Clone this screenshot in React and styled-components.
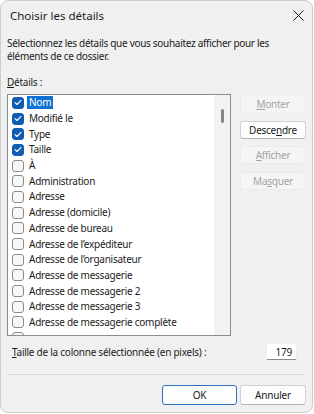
import React from 'react';
import styled, { createGlobalStyle } from 'styled-components';

const columns = [
  { label: 'Nom', checked: true, selected: true },
  { label: 'Modifié le', checked: true },
  { label: 'Type', checked: true },
  { label: 'Taille', checked: true },
  { label: 'À' },
  { label: 'Administration' },
  { label: 'Adresse' },
  { label: 'Adresse (domicile)' },
  { label: 'Adresse de bureau' },
  { label: 'Adresse de l’expéditeur' },
  { label: 'Adresse de l’organisateur' },
  { label: 'Adresse de messagerie' },
  { label: 'Adresse de messagerie 2' },
  { label: 'Adresse de messagerie 3' },
  { label: 'Adresse de messagerie complète' },
  { label: '' },
];

const CheckMark = () => (
  <svg width="8" height="7" viewBox="0 0 8 7">
    <path d="M1 3.6 L3 5.5 L7 1.3" fill="none" stroke="#fff" strokeWidth="1.1" strokeLinecap="round" strokeLinejoin="round" />
  </svg>
);

const App = () => {
  return (
    <>
      <GlobalStyle />
      <Window>
        <TitleBar>
          <Title>Choisir les détails</Title>
          <CloseButton>
            <svg width="11" height="11" viewBox="0 0 11 11">
              <path d="M0.5 0.5 L10.5 10.5 M10.5 0.5 L0.5 10.5" stroke="#1a1a1a" strokeWidth="1" />
            </svg>
          </CloseButton>
        </TitleBar>
        <Body>
          <Intro>
            Sélectionnez les détails que vous souhaitez afficher pour les
            <br />
            éléments de ce dossier.
          </Intro>
          <Label>
            <u>D</u>étails :
          </Label>
          <MainRow>
            <ListBox>
              <Rows>
                {columns.map((col, i) => (
                  <Row key={i}>
                    <Check checked={col.checked}>{col.checked && <CheckMark />}</Check>
                    {col.label && <RowText selected={col.selected}>{col.label}</RowText>}
                  </Row>
                ))}
              </Rows>
              <ScrollTrack>
                <Thumb />
              </ScrollTrack>
            </ListBox>
            <SideButtons>
              <SideButton disabled>
                <u>M</u>onter
              </SideButton>
              <SideButton>
                Desce<u>n</u>dre
              </SideButton>
              <SideButton disabled>
                <u>A</u>fficher
              </SideButton>
              <SideButton disabled>
                Ma<u>s</u>quer
              </SideButton>
            </SideButtons>
          </MainRow>
          <WidthRow>
            <span>
              <u>T</u>aille de la colonne sélectionnée (en pixels) :
            </span>
            <WidthInput>179</WidthInput>
          </WidthRow>
        </Body>
        <Separator />
        <Footer>
          <DialogButton primary>OK</DialogButton>
          <DialogButton>Annuler</DialogButton>
        </Footer>
      </Window>
    </>
  );
};

export default App;

const GlobalStyle = createGlobalStyle`
  body {
    margin: 0;
    background: #ffffff;
    font-family: "Noto Sans", "Open Sans", sans-serif;
    color: #1b1b1b;
  }
`;

const Window = styled.div`
  width: 313px;
  height: 413px;
  box-sizing: border-box;
  border: 1px solid #cdcdcd;
  border-radius: 8px;
  background: #f0f0f0;
  display: flex;
  flex-direction: column;
  overflow: hidden;
`;

const TitleBar = styled.div`
  height: 29px;
  display: flex;
  align-items: center;
  justify-content: space-between;
  padding: 0 8px 0 9px;
`;

const Title = styled.div`
  font-size: 11.5px;
  color: #1a1a1a;
`;

const CloseButton = styled.div`
  width: 12px;
  height: 12px;
  display: flex;
  align-items: center;
  justify-content: center;
`;

const Body = styled.div`
  padding: 7px 6px 0 6px;
  font-size: 10px;
  letter-spacing: -0.25px;
`;

const Intro = styled.p`
  margin: 0;
  line-height: 13px;
  white-space: nowrap;
  letter-spacing: -0.3px;
`;

const Label = styled.div`
  margin-top: 13px;
  line-height: 13px;
`;

const MainRow = styled.div`
  display: flex;
  gap: 9px;
  margin-top: 5px;
`;

const ListBox = styled.div`
  width: 224px;
  height: 242px;
  box-sizing: border-box;
  border: 1px solid #8c8c8c;
  background: #ffffff;
  display: flex;
  overflow: hidden;
`;

const Rows = styled.div`
  flex: 1;
`;

const Row = styled.div`
  height: 15.7px;
  display: flex;
  align-items: center;
  padding-left: 4px;
  white-space: nowrap;
`;

const Check = styled.span`
  width: 12px;
  height: 12px;
  box-sizing: border-box;
  border-radius: 3px;
  border: 1px solid ${p => (p.checked ? '#0f5cb3' : '#8b8b8b')};
  background: ${p => (p.checked ? '#0f5cb3' : '#f7f7f7')};
  display: flex;
  align-items: center;
  justify-content: center;
  flex-shrink: 0;
`;

const RowText = styled.span`
  margin-left: 3px;
  padding: 0 2px;
  line-height: 13px;
  background: ${p => (p.selected ? '#0f73d4' : 'transparent')};
  color: ${p => (p.selected ? '#ffffff' : '#1b1b1b')};
`;

const ScrollTrack = styled.div`
  width: 16px;
  background: #f3f3f3;
  position: relative;
`;

const Thumb = styled.div`
  position: absolute;
  left: 7px;
  top: 14px;
  width: 3px;
  height: 14px;
  border-radius: 2px;
  background: #858585;
`;

const SideButtons = styled.div`
  display: flex;
  flex-direction: column;
  gap: 7.5px;
  padding-top: 1px;
`;

const SideButton = styled.div`
  width: 66px;
  height: 18px;
  box-sizing: border-box;
  border-radius: 3px;
  display: flex;
  align-items: center;
  justify-content: center;
  border: 1px solid ${p => (p.disabled ? '#ebebeb' : '#d2d2d2')};
  border-bottom-color: ${p => (p.disabled ? '#ebebeb' : '#b5b5b5')};
  background: ${p => (p.disabled ? '#f5f5f5' : '#fdfdfd')};
  color: ${p => (p.disabled ? '#a3a3a3' : '#1b1b1b')};
`;

const WidthRow = styled.div`
  display: flex;
  align-items: center;
  justify-content: space-between;
  margin-top: 7px;
  padding: 0 9px 0 5px;
`;

const WidthInput = styled.div`
  width: 31px;
  height: 17px;
  box-sizing: border-box;
  background: #ffffff;
  border: 1px solid #ececec;
  border-bottom-color: #8a8a8a;
  border-radius: 2px;
  display: flex;
  align-items: center;
  justify-content: flex-end;
  padding-right: 4px;
`;

const Separator = styled.div`
  height: 1px;
  background: #d9d9d9;
  margin: 14px 7px 0 6px;
`;

const Footer = styled.div`
  display: flex;
  justify-content: flex-end;
  gap: 3px;
  padding: 10px 6px 0 0;
  font-size: 10px;
  letter-spacing: -0.2px;
`;

const DialogButton = styled.div`
  width: ${p => (p.primary ? '75px' : '66px')};
  height: 20px;
  box-sizing: border-box;
  border-radius: 3px;
  display: flex;
  align-items: center;
  justify-content: center;
  background: #fdfdfd;
  border: 1px solid ${p => (p.primary ? '#2c72c0' : '#d2d2d2')};
  border-bottom-color: ${p => (p.primary ? '#2c72c0' : '#b5b5b5')};
`;
